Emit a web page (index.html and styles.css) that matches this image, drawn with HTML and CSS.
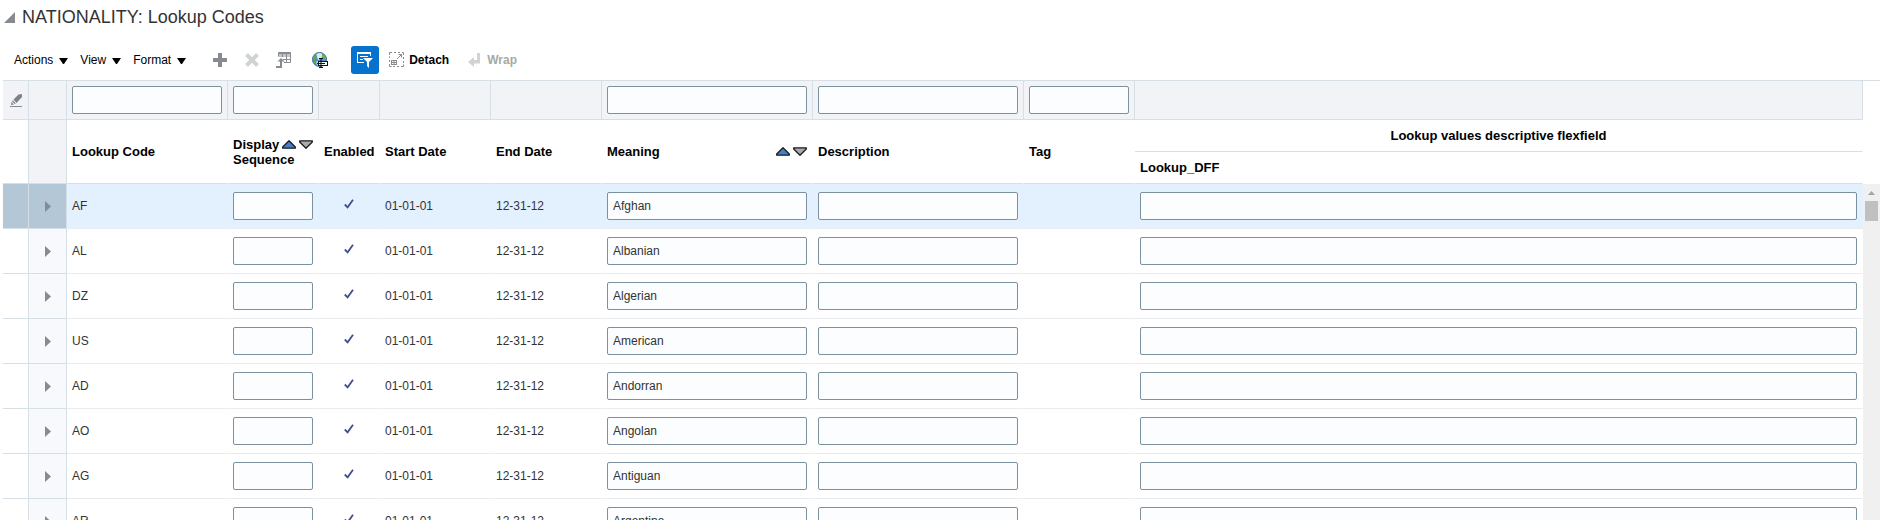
FILE: index.html
```html
<!DOCTYPE html>
<html lang="en">
<head>
<meta charset="utf-8">
<title>NATIONALITY: Lookup Codes</title>
<link rel="stylesheet" href="styles.css">
</head>
<body>
<svg class="sprite" aria-hidden="true">
  <symbol id="caret" viewBox="0 0 9 6"><path d="M0 0h9L5 6H4z" fill="#000"/></symbol>
  <symbol id="up" viewBox="0 0 14 9"><path d="M7 .8L13.300 7v1.200H.7V7z" fill="#4580c8" stroke="#1c1c1c" stroke-width="1.300" stroke-linejoin="round"/></symbol>
  <symbol id="down" viewBox="0 0 14 9"><path d="M7 8.200L13.300 2V.8H.7V2z" fill="#a9abae" stroke="#1c1c1c" stroke-width="1.300" stroke-linejoin="round"/></symbol>
  <symbol id="expand" viewBox="0 0 6 11"><path d="M0 0L6 5.5 0 11z" fill="#878b90"/></symbol>
  <symbol id="check" viewBox="0 0 10 10"><path d="M.8 5.500L3.600 8.300 9 .8" fill="none" stroke="#3d4f8c" stroke-width="1.800"/></symbol>
</svg>
<main class="panel">
  <header class="title-bar">
    <button class="icon-button" aria-label="Collapse section"><svg width="11" height="11" viewBox="0 0 11 11"><path d="M11 0v11H0z" fill="#878b90"/></svg></button>
    <h1 class="title">NATIONALITY: Lookup Codes</h1>
  </header>

  <div class="toolbar" role="toolbar" aria-label="Table actions">
    <div class="menus">
      <button class="menu">Actions<svg width="9" height="6"><use href="#caret"/></svg></button>
      <button class="menu">View<svg width="9" height="6"><use href="#caret"/></svg></button>
      <button class="menu">Format<svg width="9" height="6"><use href="#caret"/></svg></button>
    </div>
    <div class="tools">
      <button class="icon-button" aria-label="New"><svg width="16" height="16"><path d="M6 1h4v5h5v4h-5v5H6v-5H1V6h5z" fill="#878b90"/></svg></button>
      <button class="icon-button" aria-label="Delete" disabled><svg width="16" height="16"><path d="M2.5 2.5l11 11M13.500 2.500l-11 11" stroke="#d0d3d4" stroke-width="4" fill="none"/></svg></button>
      <button class="icon-button" aria-label="Export to spreadsheet"><svg width="16" height="16" fill="none" stroke="#878b90"><path d="M2.500 4.500V.5h12v10H8M2.500 4h12M7 7.500h7M6.500 1v4M10.500 1v9" /><path d="M2.500 1.500h12" stroke-width="2" /><path d="M0 15h5V9" stroke-width="2"/><path d="M1.500 9.500L5 6l3.500 3.500z" fill="#878b90" stroke="none"/></svg></button>
    </div>
    <button class="icon-button globe" aria-label="Translate"><svg width="16" height="16"><circle cx="7.500" cy="7.500" r="7" fill="#4b91cf" stroke="#3c6b96"/><path d="M1 7Q1.500 3 4 1.500L6 3 5 6 3.500 7v2L5 11l-1 2Q1.500 11 1 7z" fill="#5fa35a"/><path d="M4.500 2q3-2 6 0L9.500 6 6 8 5 5z" fill="#cdeafa"/><path d="M10 1.500Q13.500 3 14 7l-2 1-2-2z" fill="#6fae55"/><path d="M5 9l-1 2 2 3h3V9z" fill="#b6d8ee"/><rect x="6.500" y="9.500" width="9" height="4" fill="#fff" stroke="#111"/><path d="M7 6.500h4M9 6.500v9M7 15.500h4M5 11.500h8" stroke="#111" fill="none"/></svg></button>
    <button class="filter-button" aria-label="Query by example" aria-pressed="true"><svg width="16" height="16"><path d="M0 0h14v2H0zM0 2h1v9H0zM3 4h8v1H3zM3 7h3v1H3zM0 10h7v1H0zM13 2h1v2h-1z" fill="#fff"/><path d="M6 6h10l-4 4v6l-2-2v-4z" fill="#fff"/></svg></button>
    <button class="action"><svg width="16" height="16" fill="none" stroke="#878b90"><path d="M.5 3V.5H3M5 .5h2M9 .5h2M13 .5h1.500V3M14.500 5v2M14.500 9v2M14.500 12.500v2H12M10 14.500H8M6 14.500H4M2.500 14.500h-2V12M.5 10V8M.5 6V4.500"/><path d="M2.500 8v5M5 8v5M7.500 8v5M2 8.500h6M2 10.500h6M2 12.500h6M8 7l4.500-4.500M9.500 2.500h3v3"/></svg>Detach</button>
    <button class="action" disabled><svg width="16" height="16"><path d="M1 10l6-5v3h3V1h3v10.500H7V15z" fill="#d0d3d4"/></svg>Wrap</button>
  </div>

  <section class="grid">
    <table class="table head">
      <colgroup><col class="c-select"><col class="c-expand"><col class="c-code"><col class="c-seq"><col class="c-enabled"><col class="c-date"><col class="c-date"><col class="c-text"><col class="c-text"><col class="c-tag"><col></colgroup>
      <thead>
        <tr class="filters">
          <td class="mark"><button class="icon-button" aria-label="Clear filters"><svg width="12" height="13"><path d="M3.500 5.500L8.500 .5 12 0V3L6.500 9zM2.800 6.300L5.800 9.500 4.800 10 2 7.500zM1.500 8L4 10.500 1 11z" fill="#7f8387"/><path d="M0 12.500h12" stroke="#878b90"/></svg></button></td>
          <td></td>
          <td><input class="field" aria-label="Filter Lookup Code"></td>
          <td><input class="field" aria-label="Filter Display Sequence"></td>
          <td></td><td></td><td></td>
          <td><input class="field" aria-label="Filter Meaning"></td>
          <td><input class="field" aria-label="Filter Description"></td>
          <td><input class="field" aria-label="Filter Tag"></td>
          <td></td>
        </tr>
        <tr class="labels">
          <td class="select" rowspan="2"></td>
          <td class="expand" rowspan="2"></td>
          <th rowspan="2">Lookup Code</th>
          <th rowspan="2"><span class="sort"><svg width="14" height="9"><use href="#up"/></svg><svg width="14" height="9"><use href="#down"/></svg></span>Display Sequence</th>
          <th rowspan="2">Enabled</th>
          <th rowspan="2">Start Date</th>
          <th rowspan="2">End Date</th>
          <th rowspan="2"><span class="sort"><svg width="14" height="9"><use href="#up"/></svg><svg width="14" height="9"><use href="#down"/></svg></span>Meaning</th>
          <th rowspan="2">Description</th>
          <th rowspan="2">Tag</th>
          <th class="group">Lookup values descriptive flexfield</th>
        </tr>
        <tr class="labels"><th>Lookup_DFF</th></tr>
      </thead>
    </table>
    <div class="rows">
      <table class="table body">
        <colgroup><col class="c-select"><col class="c-expand"><col class="c-code"><col class="c-seq"><col class="c-enabled"><col class="c-date"><col class="c-date"><col class="c-text"><col class="c-text"><col class="c-tag"><col></colgroup>
        <tbody>
          <tr class="selected"><td class="select"></td><td class="expand"><button class="icon-button" aria-label="Expand AF"><svg width="6" height="11"><use href="#expand"/></svg></button></td><td>AF</td><td><input class="field" aria-label="Display Sequence"></td><td class="enabled"><svg width="10" height="10" role="img" aria-label="Enabled"><use href="#check"/></svg></td><td>01-01-01</td><td>12-31-12</td><td><input class="field" aria-label="Meaning" value="Afghan"></td><td><input class="field" aria-label="Description"></td><td></td><td><input class="field" aria-label="Lookup_DFF"></td></tr>
          <tr><td class="select"></td><td class="expand"><button class="icon-button" aria-label="Expand AL"><svg width="6" height="11"><use href="#expand"/></svg></button></td><td>AL</td><td><input class="field" aria-label="Display Sequence"></td><td class="enabled"><svg width="10" height="10" role="img" aria-label="Enabled"><use href="#check"/></svg></td><td>01-01-01</td><td>12-31-12</td><td><input class="field" aria-label="Meaning" value="Albanian"></td><td><input class="field" aria-label="Description"></td><td></td><td><input class="field" aria-label="Lookup_DFF"></td></tr>
          <tr><td class="select"></td><td class="expand"><button class="icon-button" aria-label="Expand DZ"><svg width="6" height="11"><use href="#expand"/></svg></button></td><td>DZ</td><td><input class="field" aria-label="Display Sequence"></td><td class="enabled"><svg width="10" height="10" role="img" aria-label="Enabled"><use href="#check"/></svg></td><td>01-01-01</td><td>12-31-12</td><td><input class="field" aria-label="Meaning" value="Algerian"></td><td><input class="field" aria-label="Description"></td><td></td><td><input class="field" aria-label="Lookup_DFF"></td></tr>
          <tr><td class="select"></td><td class="expand"><button class="icon-button" aria-label="Expand US"><svg width="6" height="11"><use href="#expand"/></svg></button></td><td>US</td><td><input class="field" aria-label="Display Sequence"></td><td class="enabled"><svg width="10" height="10" role="img" aria-label="Enabled"><use href="#check"/></svg></td><td>01-01-01</td><td>12-31-12</td><td><input class="field" aria-label="Meaning" value="American"></td><td><input class="field" aria-label="Description"></td><td></td><td><input class="field" aria-label="Lookup_DFF"></td></tr>
          <tr><td class="select"></td><td class="expand"><button class="icon-button" aria-label="Expand AD"><svg width="6" height="11"><use href="#expand"/></svg></button></td><td>AD</td><td><input class="field" aria-label="Display Sequence"></td><td class="enabled"><svg width="10" height="10" role="img" aria-label="Enabled"><use href="#check"/></svg></td><td>01-01-01</td><td>12-31-12</td><td><input class="field" aria-label="Meaning" value="Andorran"></td><td><input class="field" aria-label="Description"></td><td></td><td><input class="field" aria-label="Lookup_DFF"></td></tr>
          <tr><td class="select"></td><td class="expand"><button class="icon-button" aria-label="Expand AO"><svg width="6" height="11"><use href="#expand"/></svg></button></td><td>AO</td><td><input class="field" aria-label="Display Sequence"></td><td class="enabled"><svg width="10" height="10" role="img" aria-label="Enabled"><use href="#check"/></svg></td><td>01-01-01</td><td>12-31-12</td><td><input class="field" aria-label="Meaning" value="Angolan"></td><td><input class="field" aria-label="Description"></td><td></td><td><input class="field" aria-label="Lookup_DFF"></td></tr>
          <tr><td class="select"></td><td class="expand"><button class="icon-button" aria-label="Expand AG"><svg width="6" height="11"><use href="#expand"/></svg></button></td><td>AG</td><td><input class="field" aria-label="Display Sequence"></td><td class="enabled"><svg width="10" height="10" role="img" aria-label="Enabled"><use href="#check"/></svg></td><td>01-01-01</td><td>12-31-12</td><td><input class="field" aria-label="Meaning" value="Antiguan"></td><td><input class="field" aria-label="Description"></td><td></td><td><input class="field" aria-label="Lookup_DFF"></td></tr>
          <tr><td class="select"></td><td class="expand"><button class="icon-button" aria-label="Expand AR"><svg width="6" height="11"><use href="#expand"/></svg></button></td><td>AR</td><td><input class="field" aria-label="Display Sequence"></td><td class="enabled"><svg width="10" height="10" role="img" aria-label="Enabled"><use href="#check"/></svg></td><td>01-01-01</td><td>12-31-12</td><td><input class="field" aria-label="Meaning" value="Argentine"></td><td><input class="field" aria-label="Description"></td><td></td><td><input class="field" aria-label="Lookup_DFF"></td></tr>
        </tbody>
      </table>
      <div class="scrollbar" aria-hidden="true">
        <svg width="7" height="4" viewBox="0 0 7 4"><path d="M3.500 0L7 4H0z" fill="#a3a5a5"/></svg>
        <div class="thumb"></div>
      </div>
    </div>
  </section>
</main>
</body>
</html>
```

FILE: styles.css
```css
* { box-sizing: border-box; }

body {
  margin: 0;
  background: #fff;
  color: #333;
  font: 12px/15px "Liberation Sans", Arial, sans-serif;
}

button, input { font: inherit; color: inherit; }

button {
  border: 0;
  padding: 0;
  background: none;
  cursor: pointer;
}

svg { display: block; flex: none; }

.sprite { position: absolute; width: 0; height: 0; }

.panel {
  display: flex;
  flex-direction: column;
  height: 100vh;
  overflow: hidden;
  padding: 0 1px 0 3px;
}

.title-bar {
  display: flex;
  align-items: center;
  gap: 7px;
  height: 34px;
  padding-left: 1px;
  flex: none;
}

.title {
  margin: 0;
  font-size: 18px;
  line-height: 24px;
  font-weight: normal;
}

.toolbar {
  display: flex;
  align-items: center;
  padding: 12px 11px 6px;
  flex: none;
}

.icon-button { display: inline-block; vertical-align: middle; }

.menus { display: flex; gap: 12px; }

.menu {
  display: flex;
  align-items: center;
  gap: 6px;
  color: #000;
}

.menu svg { margin-top: 2px; }

.tools { display: flex; gap: 16px; margin-left: 26px; }

.globe { margin-left: 20px; }

.filter-button {
  width: 28px;
  height: 28px;
  padding: 6px;
  margin: 0 10px 0 23px;
  border-radius: 3px;
  background: #0572ce;
}

.action {
  display: flex;
  align-items: center;
  gap: 4px;
  margin-right: 18px;
  color: #000;
  font-weight: bold;
}

.action:disabled { color: #a5aaa3; }

.grid {
  display: flex;
  flex-direction: column;
  flex: 1;
  min-height: 0;
  border-top: 1px solid #d6dfe6;
}

.table {
  width: 100%;
  table-layout: fixed;
  border-collapse: separate;
  border-spacing: 0;
}

.head { width: calc(100% - 17px); flex: none; }

.c-select { width: 26px; }
.c-expand { width: 38px; }
.c-code { width: 161px; }
.c-seq { width: 91px; }
.c-enabled { width: 61px; }
.c-date { width: 111px; }
.c-text { width: 211px; }
.c-tag { width: 111px; }

th, td {
  padding: 0 5px;
  border-right: 1px solid transparent;
  text-align: left;
  vertical-align: middle;
}

.filters td {
  height: 39px;
  background: #f2f3f7;
  border-right-color: #d6dfe6;
  border-bottom: 1px solid #d6dfe6;
}

.filters .mark { text-align: center; }

.labels th, .labels td {
  height: 32px;
  border-bottom: 1px solid #d6dfe6;
  color: #000;
  font-size: 13px;
}

.labels .group { text-align: center; }

.labels .expand { background: #f2f3f7; }

.table .select, .table .expand {
  border-right-color: #d6dfe6;
  border-bottom-color: #d6dfe6;
}

.sort {
  float: right;
  display: flex;
  gap: 3px;
  margin-top: 3px;
}

.field {
  display: block;
  width: 100%;
  height: 28px;
  padding: 0 5px;
  border: 1px solid #7c919e;
  border-radius: 2px;
  background: #fcfdfe;
}

.rows {
  display: flex;
  flex: 1;
  min-height: 0;
  overflow: hidden;
}

.body { flex: 1; width: auto; align-self: flex-start; }

.body td {
  height: 45px;
  border-bottom: 1px solid #e9ecef;
}

.body .expand { background: #f7f9fd; text-align: center; }

.body .enabled { padding-bottom: 5px; }

.enabled svg { margin: 0 auto; }

.selected td { background: #e3f1ff; }

.selected .select, .selected .expand { background: #b3c7d6; }

.scrollbar {
  width: 17px;
  padding: 7px 2px 0;
  background: #f0f0f0;
  flex: none;
}

.scrollbar svg { margin: 0 auto; }

.thumb {
  height: 20px;
  margin-top: 6px;
  background: #bfc1c1;
}
```
